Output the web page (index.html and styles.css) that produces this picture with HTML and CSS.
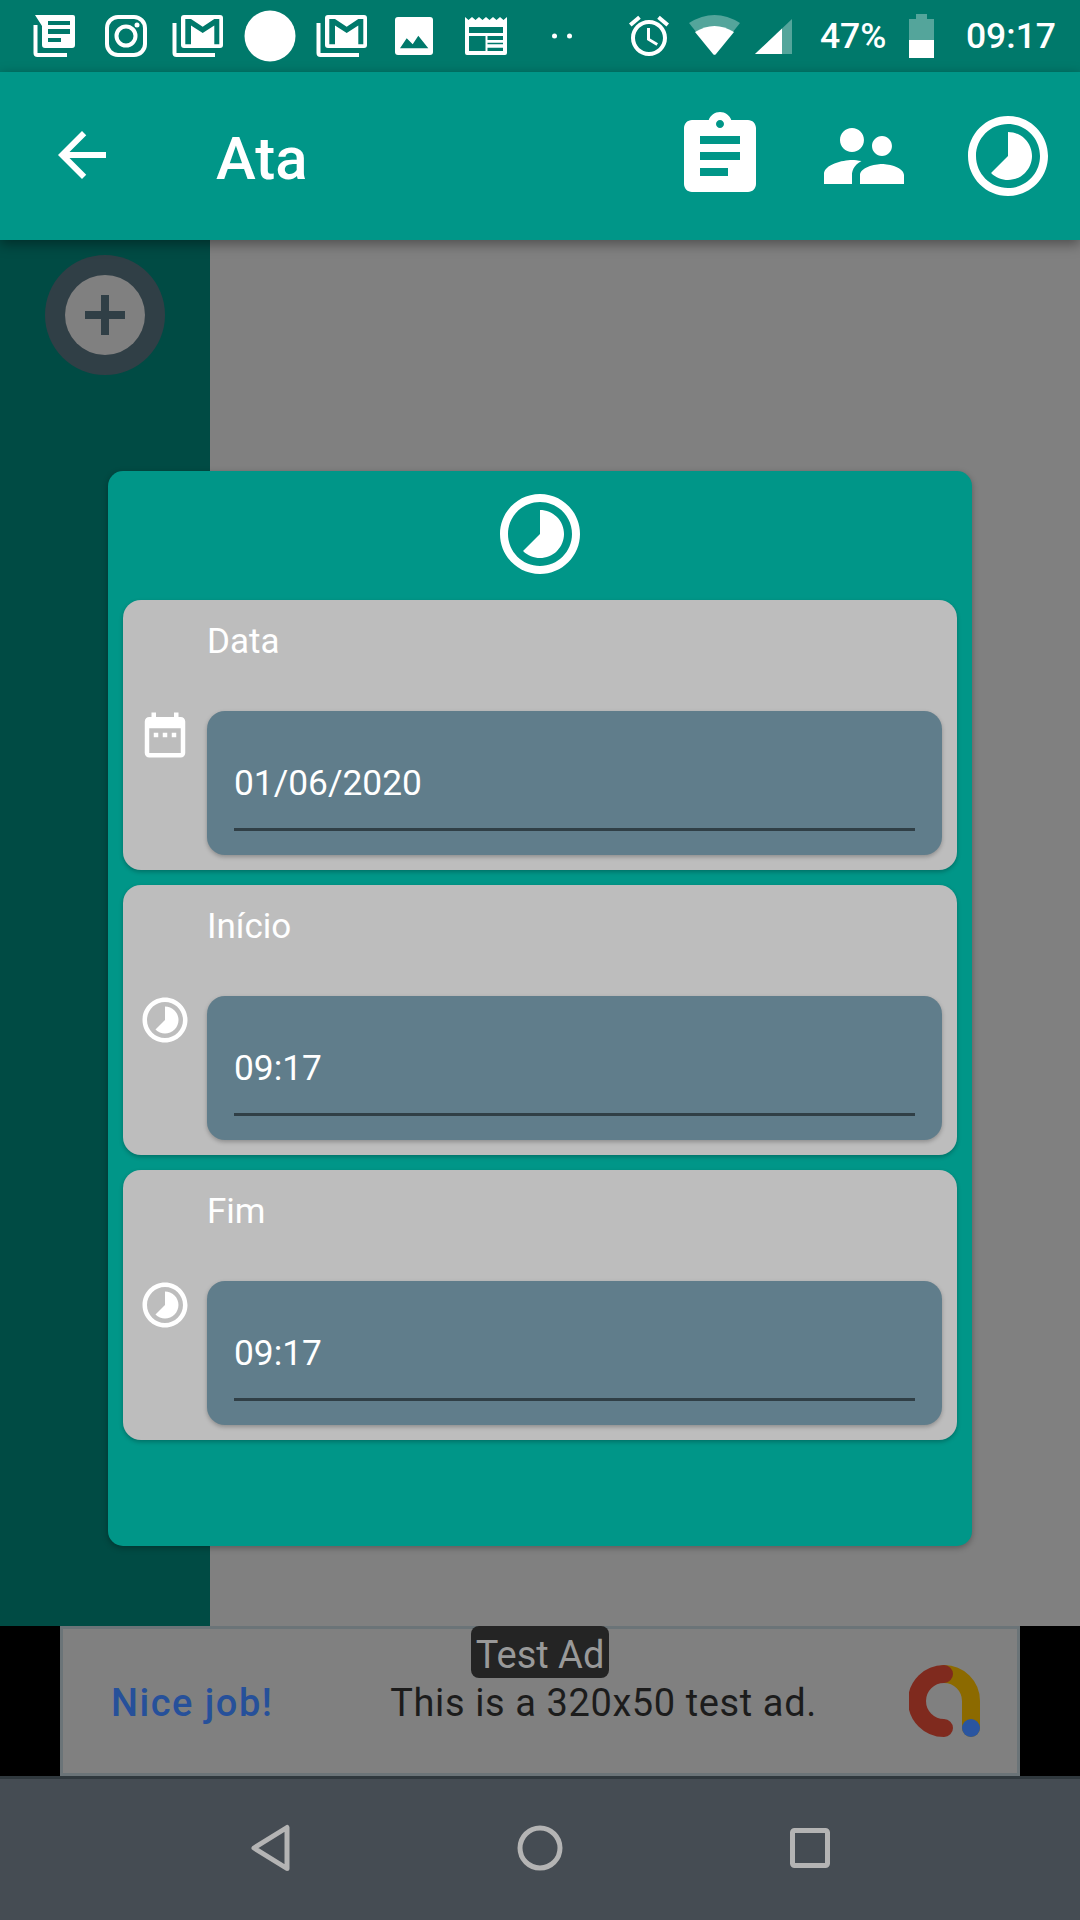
FILE: index.html
```html
<!DOCTYPE html>
<html lang="pt">
<head>
    <meta charset="UTF-8">
    <meta name="viewport" content="width=device-width, initial-scale=1.0">
    <title>Ata</title>
    <link rel="stylesheet" href="styles.css">
</head>
<body>
    <div class="phone">
        <!-- Barra de status -->
        <header class="status-bar">
            <svg class="status-cell" viewBox="0 0 72 72">
                <path class="line" d="M17.5 25V53q0 2 2 2H49"/>
                <path class="solid" d="M17 15H55a2 2 0 0 1 2 2V45a3 3 0 0 1-3 3H27a3 3 0 0 1-3-3V26Z"/>
                <path class="cut" d="M30 21H52V25H30ZM30 29H52V34H30ZM30 38H43V42H30Z"/>
            </svg>
            <svg class="status-cell" viewBox="0 0 72 72">
                <rect class="line" x="17" y="17" width="38" height="38" rx="11"/>
                <circle class="line" cx="36" cy="36" r="9.5"/>
                <circle class="solid" cx="47" cy="25" r="2.5"/>
            </svg>
            <svg class="status-cell" viewBox="0 0 72 72">
                <path class="line" d="M12.5 23V53q0 2 2 2H53"/>
                <rect class="solid" x="19" y="15" width="42" height="33" rx="3"/>
                <path class="cut" d="M23.3 19H29L40.7 26.7 52.3 19H57.3V44.3H52.3V25.5L40.7 33 29 25.5V44.3H23.3Z"/>
            </svg>
            <svg class="status-cell" viewBox="0 0 72 72">
                <circle class="solid" cx="36" cy="36" r="25.5"/>
            </svg>
            <svg class="status-cell" viewBox="0 0 72 72">
                <path class="line" d="M12.5 23V53q0 2 2 2H53"/>
                <rect class="solid" x="19" y="15" width="42" height="33" rx="3"/>
                <path class="cut" d="M23.3 19H29L40.7 26.7 52.3 19H57.3V44.3H52.3V25.5L40.7 33 29 25.5V44.3H23.3Z"/>
            </svg>
            <svg class="status-cell" viewBox="0 0 72 72">
                <rect class="solid" x="17" y="17" width="38" height="38" rx="3"/>
                <path class="cut" d="M22 48.3 28.7 38.3 34.7 44.3 40.3 35.7 50.3 48.3Z"/>
            </svg>
            <svg class="status-cell" viewBox="0 0 72 72">
                <path class="solid" d="M15 17l3.5 3 3.5-3 3.5 3 3.5-3 3.500 3 3.500-3 3.500 3 3.500-3 3.500 3 3.500-3 3.500 3 3.500-3V53a2 2 0 0 1-2 2H17a2 2 0 0 1-2-2Z"/>
                <path class="cut" d="M19 27H53V33H19ZM19 36H35.500V51H19ZM37.500 36H53V40H37.500ZM37.500 42.700H53V44.300H37.500ZM37.500 47.700H53V51H37.500Z"/>
            </svg>
            <svg class="status-cell" viewBox="0 0 72 72">
                <circle class="solid" cx="32.500" cy="36" r="2.500"/>
                <circle class="solid" cx="47.500" cy="36" r="2.500"/>
            </svg>

            <div class="status-right">
                <svg class="status-alarm" viewBox="0 0 24 24">
                    <path class="solid" d="M22 5.720l-4.600-3.860-1.290 1.530 4.600 3.860L22 5.720zM7.880 3.390L6.600 1.860 2 5.710l1.290 1.530 4.590-3.850zM12.500 8H11v6l4.750 2.850.75-1.230-4-2.370V8zM12 4c-4.970 0-9 4.030-9 9s4.030 9 9 9 9-4.030 9-9-4.030-9-9-9zm0 16c-3.870 0-7-3.130-7-7s3.130-7 7-7 7 3.130 7 7-3.130 7-7 7z"/>
                </svg>
                <svg class="status-wifi" viewBox="0 0 51 41">
                    <path class="faint" d="M0 8Q25.500-8 51 8L25.500 40Z"/>
                    <path class="solid" d="M6 17Q25.500 5 45 17L27 39a2 2 0 0 1-3 0Z"/>
                </svg>
                <svg class="status-signal" viewBox="0 0 37 36">
                    <path class="faint" d="M0 36 37 1V36Z"/>
                    <path class="solid" d="M0 36 27 10.500V36Z"/>
                </svg>
                <span class="status-text status-battery-text">47%</span>
                <svg class="status-battery" viewBox="0 0 25 44">
                    <path class="faint" d="M7 0H18V5H25V26H0V5H7Z"/>
                    <rect class="solid" y="26" width="25" height="18"/>
                </svg>
                <span class="status-text status-clock">09:17</span>
            </div>
        </header>

        <!-- Barra do app -->
        <nav class="app-bar">
            <svg class="back-icon" viewBox="0 0 24 24">
                <path d="M20 11H7.830l5.590-5.590L12 4l-8 8 8 8 1.410-1.410L7.830 13H20v-2z"/>
            </svg>
            <h1 class="app-title">Ata</h1>
            <div class="app-actions">
                <svg viewBox="0 0 24 24">
                    <path d="M19 3h-4.180C14.400 1.840 13.300 1 12 1c-1.300 0-2.400.84-2.820 2H5c-1.100 0-2 .9-2 2v14c0 1.100.9 2 2 2h14c1.100 0 2-.9 2-2V5c0-1.100-.9-2-2-2zm-7 0c.55 0 1 .45 1 1s-.45 1-1 1-1-.45-1-1 .45-1 1-1zm2 14H7v-2h7v2zm3-4H7v-2h10v2zm0-4H7V7h10v2z"/>
                </svg>
                <svg viewBox="0 0 24 24">
                    <path d="M16.500 12c1.380 0 2.490-1.120 2.490-2.500S17.880 7 16.500 7C15.120 7 14 8.120 14 9.500s1.120 2.500 2.500 2.500zM9 11c1.660 0 2.990-1.340 2.990-3S10.660 5 9 5C7.340 5 6 6.340 6 8s1.340 3 3 3zm7.500 3c-1.830 0-5.500.92-5.500 2.750V19h11v-2.250c0-1.830-3.670-2.750-5.500-2.750zM9 13c-2.330 0-7 1.170-7 3.500V19h7v-2.250c0-.85.33-2.340 2.370-3.470C10.500 13.100 9.660 13 9 13z"/>
                </svg>
                <svg viewBox="0 0 24 24">
                    <path d="M16.240 7.760C15.070 6.590 13.540 6 12 6v6l-4.240 4.240c2.340 2.340 6.140 2.340 8.490 0 2.340-2.340 2.340-6.140-.01-8.480zM12 2C6.480 2 2 6.480 2 12s4.480 10 10 10 10-4.480 10-10S17.520 2 12 2zm0 18c-4.420 0-8-3.580-8-8s3.580-8 8-8 8 3.580 8 8-3.580 8-8 8z"/>
                </svg>
            </div>
        </nav>

        <main class="content">
            <aside class="side-panel">
                <div class="add-button">
                    <span class="add-circle">
                        <svg viewBox="0 0 40 40"><path d="M16 0H24V16H40V24H24V40H16V24H0V16H16Z"/></svg>
                    </span>
                </div>
            </aside>

            <!-- Dialogo -->
            <section class="dialog">
                <svg class="dialog-icon" viewBox="0 0 24 24">
                    <path d="M16.240 7.760C15.070 6.590 13.540 6 12 6v6l-4.240 4.240c2.340 2.340 6.140 2.340 8.490 0 2.340-2.340 2.340-6.140-.01-8.480zM12 2C6.480 2 2 6.480 2 12s4.480 10 10 10 10-4.480 10-10S17.520 2 12 2zm0 18c-4.420 0-8-3.580-8-8s3.580-8 8-8 8 3.580 8 8-3.580 8-8 8z"/>
                </svg>

                <div class="field-card">
                    <svg class="field-icon" viewBox="0 0 24 24">
                        <path d="M9 11H7v2h2v-2zm4 0h-2v2h2v-2zm4 0h-2v2h2v-2zm2-7h-1V2h-2v2H8V2H6v2H5c-1.110 0-1.990.9-1.990 2L3 20c0 1.100.89 2 2 2h14c1.100 0 2-.9 2-2V6c0-1.100-.9-2-2-2zm0 16H5V9h14v11z"/>
                    </svg>
                    <div class="field-main">
                        <div class="field-label">Data</div>
                        <div class="field-input"><div class="field-value">01/06/2020</div></div>
                    </div>
                </div>

                <div class="field-card">
                    <svg class="field-icon" viewBox="0 0 24 24">
                        <path d="M16.240 7.760C15.070 6.590 13.540 6 12 6v6l-4.240 4.240c2.340 2.340 6.140 2.340 8.490 0 2.340-2.340 2.340-6.140-.01-8.480zM12 2C6.480 2 2 6.480 2 12s4.480 10 10 10 10-4.480 10-10S17.520 2 12 2zm0 18c-4.420 0-8-3.580-8-8s3.580-8 8-8 8 3.580 8 8-3.580 8-8 8z"/>
                    </svg>
                    <div class="field-main">
                        <div class="field-label">Início</div>
                        <div class="field-input"><div class="field-value">09:17</div></div>
                    </div>
                </div>

                <div class="field-card">
                    <svg class="field-icon" viewBox="0 0 24 24">
                        <path d="M16.240 7.760C15.070 6.590 13.540 6 12 6v6l-4.240 4.240c2.340 2.340 6.140 2.340 8.490 0 2.340-2.340 2.340-6.140-.01-8.480zM12 2C6.480 2 2 6.480 2 12s4.480 10 10 10 10-4.480 10-10S17.520 2 12 2zm0 18c-4.420 0-8-3.580-8-8s3.580-8 8-8 8 3.580 8 8-3.580 8-8 8z"/>
                    </svg>
                    <div class="field-main">
                        <div class="field-label">Fim</div>
                        <div class="field-input"><div class="field-value">09:17</div></div>
                    </div>
                </div>
            </section>
        </main>

        <!-- Anuncio -->
        <div class="ad-strip">
            <div class="ad-frame">
                <span class="ad-badge">Test Ad</span>
                <span class="ad-title">Nice job!</span>
                <span class="ad-text">This is a 320x50 test ad.</span>
                <svg class="ad-logo" viewBox="0 0 72 72">
                    <path class="ad-yellow" d="M35 9A27 27 0 0 1 62 36V63"/>
                    <path class="ad-red" d="M35 9A27 27 0 0 0 35 63"/>
                    <circle class="ad-blue" cx="62" cy="63" r="9"/>
                </svg>
            </div>
        </div>

        <!-- Navegacao do sistema -->
        <footer class="nav-bar">
            <svg viewBox="0 0 72 72"><path d="M53 15.500V56.500L20 36Z"/></svg>
            <svg viewBox="0 0 72 72"><circle cx="36" cy="36" r="20"/></svg>
            <svg viewBox="0 0 72 72"><rect x="18.500" y="18.500" width="35" height="35" rx="2"/></svg>
        </footer>
    </div>
</body>
</html>
```

FILE: styles.css
```css
* {
    box-sizing: border-box;
}
body {
    margin: 0;
    font-family: Roboto, "Liberation Sans", sans-serif;
    color: #fff;
}
.phone {
    width: 1080px;
    height: 1920px;
    display: flex;
    flex-direction: column;
    overflow: hidden;
}

/* Barra de status */
.status-bar {
    height: 72px;
    flex: none;
    display: flex;
    padding-left: 18px;
    background-color: #00796b;
}
.status-cell {
    width: 72px;
    height: 72px;
    flex: none;
}
.status-bar .solid {
    fill: #fff;
}
.status-bar .cut {
    fill: #00796b;
}
.status-bar .faint {
    fill: rgba(255, 255, 255, 0.33);
}
.status-bar .line {
    fill: none;
    stroke: #fff;
    stroke-width: 4;
}
.status-right {
    margin-left: auto;
    padding-right: 24px;
    display: flex;
    align-items: center;
}
.status-alarm {
    width: 48px;
    height: 48px;
}
.status-wifi {
    width: 51px;
    height: 41px;
    margin-left: 16px;
    margin-bottom: 2px;
}
.status-signal {
    width: 37px;
    height: 36px;
    margin-left: 15px;
}
.status-text {
    font-size: 35.5px;
    font-weight: 500;
    line-height: 72px;
}
.status-battery-text {
    margin-left: 27.5px;
}
.status-battery {
    width: 25px;
    height: 44px;
    margin-left: 23px;
}
.status-clock {
    margin-left: 31.5px;
}

/* Barra do app */
.app-bar {
    height: 168px;
    flex: none;
    display: flex;
    align-items: center;
    background-color: #009688;
    box-shadow: 0 4px 12px rgba(0, 0, 0, 0.4);
    position: relative;
    z-index: 2;
}
.app-bar svg {
    fill: #fff;
}
.back-icon {
    width: 72px;
    height: 72px;
    margin-left: 46px;
    margin-top: -2px;
}
.app-title {
    margin: 5px 0 0 98px;
    font-size: 60px;
    font-weight: 500;
    line-height: 70px;
}
.app-actions {
    margin-left: auto;
    display: flex;
}
.app-actions svg {
    width: 96px;
    height: 96px;
    margin-right: 48px;
    margin-left: 0;
}
.app-actions svg:last-child {
    margin-right: 24px;
}

/* Conteudo */
.content {
    height: 1386px;
    flex: none;
    display: flex;
    position: relative;
    background-color: #808080;
}
.side-panel {
    width: 210px;
    background-color: #004b44;
    padding: 15px 0 0 45px;
}
.add-button {
    width: 120px;
    height: 120px;
    border-radius: 50%;
    background-color: #303f46;
    display: flex;
    align-items: center;
    justify-content: center;
}
.add-circle {
    width: 80px;
    height: 80px;
    border-radius: 50%;
    background-color: #808080;
    display: flex;
    align-items: center;
    justify-content: center;
}
.add-circle svg {
    width: 40px;
    height: 40px;
    fill: #303f46;
}

/* Dialogo */
.dialog {
    position: absolute;
    left: 108px;
    top: 231px;
    width: 864px;
    height: 1075px;
    padding: 15px;
    display: flex;
    flex-direction: column;
    gap: 15px;
    background-color: #009688;
    border-radius: 15px;
    box-shadow: 0 2px 6px rgba(0, 0, 0, 0.3);
}
.dialog-icon {
    width: 96px;
    height: 96px;
    flex: none;
    align-self: center;
    margin-bottom: 3px;
    fill: #fff;
}
.field-card {
    height: 270px;
    flex: none;
    display: flex;
    background-color: #bdbdbd;
    border-radius: 18px;
    box-shadow: 0 2px 4px rgba(0, 0, 0, 0.25);
}
.field-icon {
    width: 54px;
    height: 54px;
    flex: none;
    margin: 108px 15px 0 15px;
    fill: #fff;
}
.field-main {
    flex: 1;
    padding-right: 15px;
}
.field-label {
    height: 111px;
    padding: 22px 0 0 0;
    font-size: 35px;
    line-height: 40px;
}
.field-input {
    height: 144px;
    padding: 51px 27px 0;
    background-color: #607d8b;
    border-radius: 18px;
    box-shadow: 0 2px 4px rgba(0, 0, 0, 0.25);
}
.field-value {
    padding-bottom: 24px;
    border-bottom: 3px solid #303f46;
    font-size: 35.3px;
    line-height: 42px;
}

/* Anuncio */
.ad-strip {
    height: 150px;
    flex: none;
    padding: 0 60px;
    background-color: #000;
}
.ad-frame {
    height: 100%;
    display: flex;
    align-items: center;
    position: relative;
    border: 3px solid #6b7478;
    background-color: #808080;
}
.ad-badge {
    position: absolute;
    top: -3px;
    left: 408px;
    width: 138px;
    height: 52px;
    padding-top: 6px;
    border-radius: 8px;
    background-color: #242424;
    color: #999;
    font-size: 38px;
    line-height: 46px;
    text-align: center;
}
.ad-title {
    margin-left: 48px;
    padding-top: 4px;
    color: #26509a;
    font-size: 38px;
    font-weight: 500;
    letter-spacing: 1.5px;
    line-height: 42px;
}
.ad-text {
    margin-left: 117px;
    padding-top: 4px;
    color: #1c1c1c;
    font-size: 38px;
    letter-spacing: 0.6px;
    line-height: 42px;
}
.ad-logo {
    width: 72px;
    height: 72px;
    margin-left: auto;
    margin-right: 36px;
    fill: none;
    stroke-width: 18;
    stroke-linecap: round;
}
.ad-yellow {
    stroke: #8c6a00;
}
.ad-red {
    stroke: #7f2a1e;
}
.ad-blue {
    fill: #2a55a0;
}

/* Navegacao do sistema */
.nav-bar {
    flex: 1;
    display: flex;
    justify-content: center;
    align-items: center;
    gap: 198px;
    padding-bottom: 3px;
    border-top: 3px solid #30393e;
    background-color: #454c53;
}
.nav-bar svg {
    width: 72px;
    height: 72px;
    fill: none;
    stroke: #b4b4b4;
    stroke-width: 5;
    stroke-linejoin: round;
}
```
